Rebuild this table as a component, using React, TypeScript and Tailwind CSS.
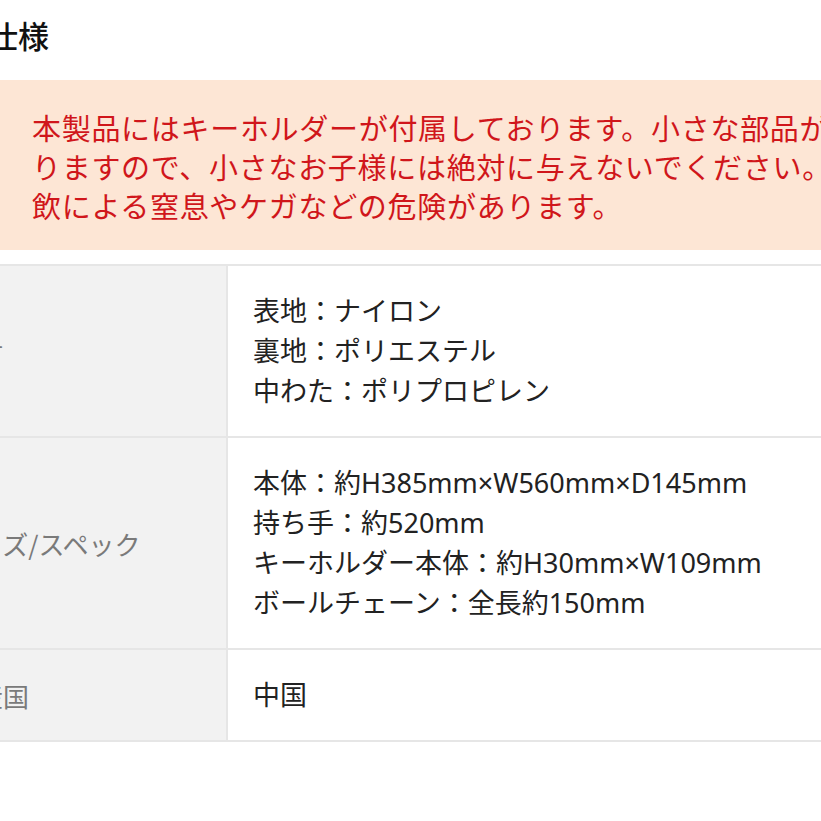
const font = { fontFamily: '"Noto Sans CJK JP", "Noto Sans", sans-serif' };
const bodyFont = { fontFamily: '"Noto Sans", "Noto Sans CJK JP", sans-serif' };

const specs: { label: string; lines: string[] }[] = [
  { label: '素材', lines: ['表地：ナイロン', '裏地：ポリエステル', '中わた：ポリプロピレン'] },
  {
    label: 'サイズ/スペック',
    lines: [
      '本体：約H385mm×W560mm×D145mm',
      '持ち手：約520mm',
      'キーホルダー本体：約H30mm×W109mm',
      'ボールチェーン：全長約150mm',
    ],
  },
  { label: '原産国', lines: ['中国'] },
];

export default function App() {
  return (
    <div className="w-[821px] h-[821px] overflow-hidden bg-white" style={font}>
      <div className="ml-[-73px] w-[1000px]">
        <h2 className="pl-[60px] pt-[15px] text-[31px] leading-[40px] font-medium text-[#111]">仕様</h2>

        <div className="mt-[25px] bg-[#fde6d5] pl-[105px] pt-[28px] pb-[25px] text-[29px] leading-[39px] tracking-[0.7px] text-[#d0161b] whitespace-nowrap">
          本製品にはキーホルダーが付属しております。小さな部品があ
          <br />
          りますので、小さなお子様には絶対に与えないでください。誤
          <br />
          飲による窒息やケガなどの危険があります。
        </div>

        <div className="mt-[14px] grid grid-cols-[299px_1fr] gap-[2px] bg-[#e6e6e6] border-y-2 border-[#e6e6e6]">
          {specs.map((row) => (
            <div key={row.label} className="contents">
              <div className="bg-[#f2f2f2] flex items-center pl-[24px] text-[26px] text-[#7a7a7a] whitespace-nowrap">
                {row.label}
              </div>
              <div
                className="bg-white pl-[25px] py-[25px] text-[27px] leading-[40px] text-[#222] whitespace-nowrap"
                style={bodyFont}
              >
                {row.lines.map((l) => (
                  <div key={l}>{l}</div>
                ))}
              </div>
            </div>
          ))}
        </div>
      </div>
    </div>
  );
}
